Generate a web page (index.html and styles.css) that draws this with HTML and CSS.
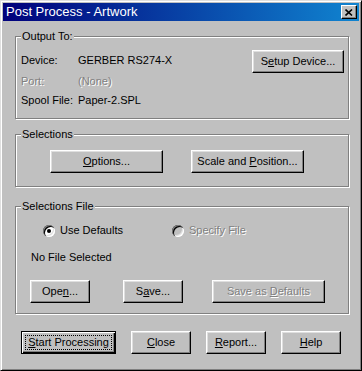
FILE: index.html
```html
<!DOCTYPE html>
<html lang="en">
<head>
  <meta charset="UTF-8" />
  <title>Post Process - Artwork</title>
  <link rel="stylesheet" href="styles.css">
</head>
<body>

  <div class="window">
    <div class="titlebar">
      <span class="title">Post Process - Artwork</span>
      <button class="close-btn" aria-label="Close">
        <svg width="8" height="7" viewBox="0 0 8 7"><path d="M0.5 0.5L7 6.5M7 0.5L0.5 6.5" stroke="#000" stroke-width="1.6" fill="none"/></svg>
      </button>
    </div>

    <div class="content">
      <!-- Output To -->
      <fieldset class="group group-output">
        <legend>Output To:</legend>
        <div class="out-row first">
          <span class="lbl">Device:</span>
          <span class="val">GERBER RS274-X</span>
          <button class="btn btn-setup">S<u>e</u>tup Device...</button>
        </div>
        <div class="out-row port disabled">
          <span class="lbl">Port:</span>
          <span class="val">(None)</span>
        </div>
        <div class="out-row spool">
          <span class="lbl">Spool File:</span>
          <span class="val">Paper-2.SPL</span>
        </div>
      </fieldset>

      <!-- Selections -->
      <fieldset class="group group-sel">
        <legend>Selections</legend>
        <div class="sel-buttons">
          <button class="btn btn-wide"><u>O</u>ptions...</button>
          <button class="btn btn-wide">Scale and <u>P</u>osition...</button>
        </div>
      </fieldset>

      <!-- Selections File -->
      <fieldset class="group group-file">
        <legend>Selections File</legend>
        <div class="radio-row">
          <label class="radio-item first"><span class="radio checked"></span>Use Defaults</label>
          <label class="radio-item disabled"><span class="radio off"></span>Specify File</label>
        </div>
        <div class="file-name">No File Selected</div>
        <div class="file-buttons">
          <button class="btn btn-small">Ope<u>n</u>...</button>
          <button class="btn btn-small btn-save">S<u>a</u>ve...</button>
          <button class="btn btn-defaults disabled">Save as <u>D</u>efaults</button>
        </div>
      </fieldset>

      <div class="actions">
        <button class="btn btn-default"><u>S</u>tart Processing</button>
        <button class="btn btn-small"><u>C</u>lose</button>
        <button class="btn btn-small"><u>R</u>eport...</button>
        <button class="btn btn-small"><u>H</u>elp</button>
      </div>
    </div>
  </div>

</body>
</html>
```

FILE: styles.css
```css
body {
  margin: 0;
  background-color: #c0c0c0;
  font-family: "Liberation Sans", Arial, sans-serif;
  font-size: 11px;
  line-height: 13px;
  color: #000;
}

.window {
  width: 362px;
  height: 371px;
  box-sizing: border-box;
  padding: 2px;
  background-color: #c0c0c0;
  border: 1px solid;
  border-color: #dfdfdf #000 #000 #dfdfdf;
  box-shadow: inset 1px 1px #fff, inset -1px -1px #808080;
}

.titlebar {
  height: 18px;
  display: flex;
  align-items: center;
  justify-content: space-between;
  padding-left: 3px;
  background: linear-gradient(to right, #00007b, #1084d0);
}

.title {
  color: #fff;
  font-size: 13px;
  line-height: 16px;
}

.close-btn {
  width: 16px;
  height: 14px;
  margin-right: 2px;
  padding: 0;
  display: flex;
  align-items: center;
  justify-content: center;
  background-color: #c0c0c0;
  border: 1px solid;
  border-color: #fff #000 #000 #fff;
  box-shadow: inset -1px -1px #808080;
}

.content {
  padding: 9px 10px 0 12px;
}

/* group boxes */
.group {
  margin: 0;
  min-width: 0;
  border: 1px solid #808080;
  box-shadow: 1px 1px 0 #fff, inset 1px 1px 0 #fff;
  padding: 0 4px 11px 5px;
}

.group legend {
  padding: 0 1px;
  line-height: 13px;
  background-color: #c0c0c0;
}

.group-output {
  padding-top: 7px;
}

.group-sel {
  margin-top: 9px;
  padding-top: 9px;
  padding-bottom: 13px;
}

.group-file {
  margin-top: 13px;
  padding-top: 11px;
  padding-bottom: 10px;
}

.out-row {
  display: flex;
  align-items: flex-start;
}

.out-row.first {
  height: 23px;
}

.out-row.first .lbl,
.out-row.first .val {
  padding-top: 4px;
}

.out-row.port {
  margin-top: 2px;
}

.out-row.spool {
  margin-top: 6px;
}

.lbl {
  width: 57px;
}

.btn-setup {
  margin-left: auto;
  width: 92px;
}

.disabled {
  color: #808080;
  text-shadow: 1px 1px 0 #fff;
}

/* buttons */
.btn {
  height: 23px;
  padding: 0;
  font-family: inherit;
  font-size: 11px;
  line-height: 13px;
  color: #000;
  background-color: #c0c0c0;
  border: 1px solid;
  border-color: #fff #000 #000 #fff;
  box-shadow: inset -1px -1px #808080, inset 1px 1px #dfdfdf;
}

.btn.disabled {
  color: #808080;
}

.sel-buttons {
  display: flex;
  gap: 28px;
  padding-left: 29px;
}

.btn-wide {
  width: 113px;
}

.btn-small {
  width: 60px;
}

/* radios */
.radio-row {
  display: flex;
  padding-left: 22px;
}

.radio-item {
  display: flex;
  align-items: center;
  gap: 5px;
}

.radio-item.first {
  width: 129px;
}

.radio {
  position: relative;
  width: 12px;
  height: 12px;
  border-radius: 50%;
  background-color: #fff;
  box-shadow: inset 1px 1px #808080, inset 2px 2px #000, inset -1px -1px #fff, inset -2px -2px #dfdfdf;
}

.radio.off {
  background-color: #c0c0c0;
}

.radio.checked::after {
  content: "";
  position: absolute;
  left: 4px;
  top: 4px;
  width: 4px;
  height: 4px;
  border-radius: 50%;
  background-color: #000;
}

.file-name {
  margin-top: 14px;
  padding-left: 10px;
}

.file-buttons {
  display: flex;
  margin-top: 16px;
  padding-left: 9px;
}

.btn-save {
  margin-left: 33px;
}

.btn-defaults {
  width: 113px;
  margin-left: 29px;
}

/* bottom row */
.actions {
  display: flex;
  gap: 15px;
  margin-top: 17px;
  padding-left: 6px;
}

.btn-default {
  position: relative;
  width: 95px;
  border-color: #000;
  box-shadow: inset 1px 1px #fff, inset -1px -1px #000, inset -2px -2px #808080;
}

.btn-default::after {
  content: "";
  position: absolute;
  top: 3px;
  left: 3px;
  right: 3px;
  bottom: 3px;
  border: 1px dotted #000;
}
```
